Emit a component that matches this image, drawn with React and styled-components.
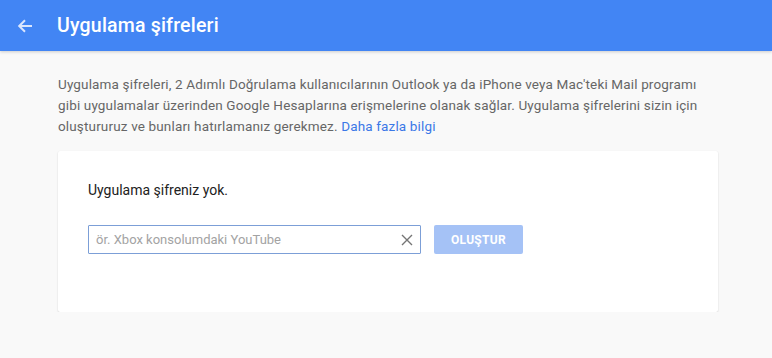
import React, { useState } from 'react'
import styled, { createGlobalStyle } from 'styled-components'

const GlobalStyle = createGlobalStyle`
  html, body {
    margin: 0;
    padding: 0;
    background: #f9f9f9;
    font-family: Roboto, 'Liberation Sans', Arial, sans-serif;
  }
`

const App = () => {
  const [name, setName] = useState('')

  return (
    <>
      <GlobalStyle />
      <Header>
        <BackButton aria-label="Geri">
          <svg width="16" height="16" viewBox="0 0 16 16">
            <path d="M15 8H2.5M8 2.2L2.2 8 8 13.8" stroke="#dbe6fd" strokeWidth="2" fill="none" />
          </svg>
        </BackButton>
        <Title>Uygulama şifreleri</Title>
      </Header>

      <Main>
        <Intro>
          Uygulama şifreleri, 2 Adımlı Doğrulama kullanıcılarının Outlook ya da iPhone veya Mac'teki Mail programı
          gibi uygulamalar üzerinden Google Hesaplarına erişmelerine olanak sağlar. Uygulama şifrelerini sizin için
          oluştururuz ve bunları hatırlamanız gerekmez. <MoreLink href="#">Daha fazla bilgi</MoreLink>
        </Intro>

        <Card>
          <EmptyText>Uygulama şifreniz yok.</EmptyText>
          <FormRow>
            <InputBox>
              <Input
                value={name}
                onChange={(e) => setName(e.target.value)}
                placeholder="ör. Xbox konsolumdaki YouTube"
              />
              <ClearButton aria-label="Temizle" onClick={() => setName('')}>
                <svg width="12" height="12" viewBox="0 0 12 12">
                  <path d="M1 1L11 11M11 1L1 11" stroke="#757575" strokeWidth="1.4" fill="none" />
                </svg>
              </ClearButton>
            </InputBox>
            <CreateButton disabled={!name}>OLUŞTUR</CreateButton>
          </FormRow>
        </Card>
      </Main>
    </>
  )
}

const Header = styled.header`
  display: flex;
  align-items: center;
  height: 51px;
  padding: 0 0 0 14px;
  background-color: #4285f4;
  box-shadow: 0 1px 3px rgba(0, 0, 0, 0.18);
`

const BackButton = styled.button`
  display: flex;
  align-items: center;
  justify-content: center;
  width: 22px;
  height: 22px;
  padding: 0;
  margin-right: 21px;
  border: none;
  background: none;
  cursor: pointer;
`

const Title = styled.h1`
  margin: 0;
  font-size: 19.5px;
  font-weight: 500;
  color: #ffffff;
  letter-spacing: 0.2px;
`

const Main = styled.main`
  padding: 23px 54px 0 58px;
`

const Intro = styled.p`
  max-width: 652px;
  margin: 0 0 14px;
  font-size: 13.5px;
  line-height: 21px;
  letter-spacing: 0.15px;
  color: #666666;
`

const MoreLink = styled.a`
  color: #3b78e7;
  text-decoration: none;
`

const Card = styled.section`
  box-sizing: border-box;
  width: 660px;
  height: 161px;
  padding: 29px 30px;
  background: #ffffff;
  border-radius: 2px;
  box-shadow: 0 1px 2px rgba(0, 0, 0, 0.14), 0 0 1px rgba(0, 0, 0, 0.06);
`

const EmptyText = styled.p`
  margin: 0 0 25px;
  font-size: 14px;
  line-height: 20px;
  color: #212121;
`

const FormRow = styled.div`
  display: flex;
  align-items: center;
  gap: 13px;
`

const InputBox = styled.div`
  display: flex;
  align-items: center;
  box-sizing: border-box;
  width: 333px;
  height: 29px;
  border: 1px solid #7c9fd7;
  border-radius: 1px;
  background: #ffffff;
`

const Input = styled.input`
  flex: 1;
  min-width: 0;
  height: 100%;
  padding: 0 7px;
  border: none;
  outline: none;
  background: transparent;
  font-family: inherit;
  font-size: 13px;
  color: #212121;
  caret-color: #000;

  &::placeholder {
    color: #a3a3a3;
  }
`

const ClearButton = styled.button`
  display: flex;
  align-items: center;
  justify-content: center;
  width: 26px;
  height: 100%;
  padding: 0;
  border: none;
  background: none;
  cursor: pointer;
`

const CreateButton = styled.button`
  width: 89px;
  height: 29px;
  border: none;
  border-radius: 2px;
  background-color: #4285f4;
  color: #ffffff;
  font-family: inherit;
  font-size: 12px;
  font-weight: 700;
  letter-spacing: 0.3px;
  cursor: pointer;

  &:disabled {
    background-color: #a5c2f6;
    cursor: default;
  }
`

export default App
